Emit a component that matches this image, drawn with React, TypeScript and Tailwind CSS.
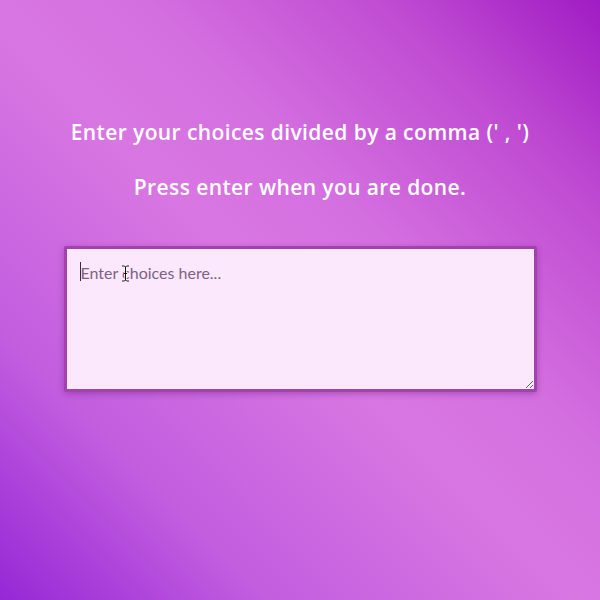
import React, { useState } from "react";

export default function App() {
  const [choices, setChoices] = useState("");

  return (
    <div
      className="w-full h-[600px] flex flex-col items-center bg-[linear-gradient(to_top_right,#9628d6_0%,#c25ddf_22%,#d877e2_48%,#d46fe0_62%,#c04cd2_82%,#a01cc4_100%)] font-['Open_Sans',sans-serif] text-white"
    >
      <h2 className="mt-[119px] text-[21px] font-semibold leading-[26px] tracking-[0.4px]">
        Enter your choices divided by a comma (' , ')
      </h2>
      <h2 className="mt-[29px] text-[21px] font-semibold leading-[26px] tracking-[0.4px]">
        Press enter when you are done.
      </h2>
      <div className="relative mt-[46px]">
        <textarea
          value={choices}
          onChange={(e) => setChoices(e.target.value)}
          placeholder="Enter choices here..."
          className="block w-[473px] h-[146px] px-[14px] py-[12px] bg-[#fce8fc] border-[3px] border-[#a242ad] rounded-[2px] shadow-[0_2px_6px_rgba(90,20,110,0.35)] text-[16px] text-[#5a3c62] placeholder:text-[#7d6185] outline-none resize-y font-['Lato','Open_Sans',sans-serif]"
        />
        {/* caret + mouse I-beam, as in the shot */}
        <span className="absolute left-[16px] top-[16px] w-[1px] h-[19px] bg-[#3a2a40] pointer-events-none" />
        <svg className="absolute left-[57px] top-[19px] pointer-events-none" width="9" height="17" viewBox="0 0 9 17">
          <path d="M1 1h2.5L4.5 2 5.5 1H8M4.5 2v13M1 16h2.5l1-1 1 1H8M3 8.5h3" fill="none" stroke="#fff" strokeWidth="2.2" />
          <path d="M1 1h2.5L4.5 2 5.5 1H8M4.5 2v13M1 16h2.5l1-1 1 1H8M3 8.5h3" fill="none" stroke="#111" strokeWidth="1" />
        </svg>
      </div>
    </div>
  );
}
